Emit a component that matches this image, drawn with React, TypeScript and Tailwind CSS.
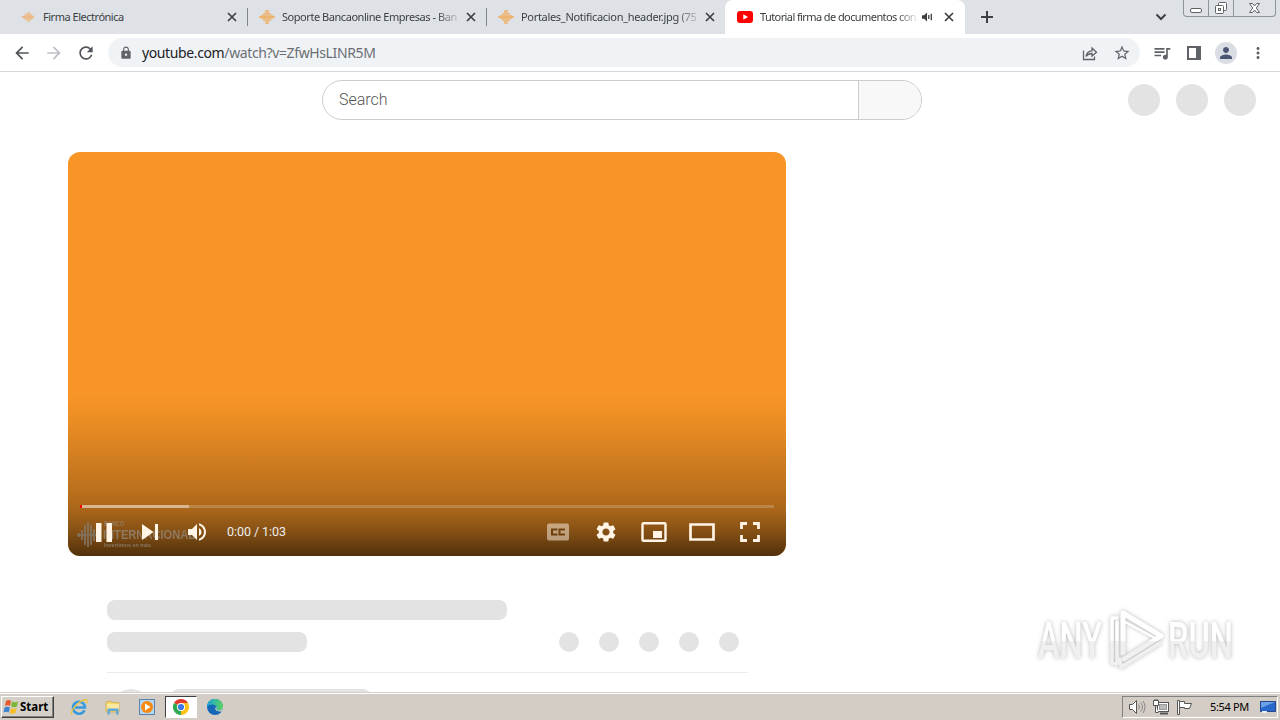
import type { ReactNode } from 'react'
import {
  MdArrowBack,
  MdArrowForward,
  MdRefresh,
  MdLock,
  MdStarOutline,
  MdQueueMusic,
  MdPerson,
  MdMoreVert,
  MdVolumeUp,
  MdSettings,
} from 'react-icons/md'

const BankIcon = ({ small = false }: { small?: boolean }) => (
  <svg width="16" height="16" viewBox="0 0 16 16" className="shrink-0">
    {small ? (
      <g stroke="#f0b47a" strokeWidth="1.6" opacity="0.9">
        <path d="M3 7v2M5 5.500v5M7 4v8M9 3v10M11 5v6M13 6.500v3M2 8h12" />
      </g>
    ) : (
      <g stroke="#eeb068" strokeWidth="1.500">
        <path d="M1 7v2M3 6v4M5 4v8M7 1v14M9 1v14M11 4v8M13 6v4M15 7v2M1 8h14" />
      </g>
    )}
  </svg>
)

const YoutubeIcon = () => (
  <svg width="16" height="12" viewBox="0 0 16 12" className="shrink-0">
    <rect width="16" height="12" rx="3" fill="#f00" />
    <path d="M6.3 3.3v5.4L11 6z" fill="#fff" />
  </svg>
)

const CloseIcon = () => (
  <svg
    width="14"
    height="14"
    viewBox="0 0 14 14"
    className="ml-auto shrink-0"
    stroke="#3c4043"
    strokeWidth="1.700"
  >
    <path d="M3 3l8 8M11 3l-8 8" />
  </svg>
)

type TabProps = {
  icon: ReactNode
  title: string
  className: string
  textClass: string
}

const Tab = ({ icon, title, className, textClass }: TabProps) => (
  <div className={`flex h-[18px] items-center ${className}`}>
    {icon}
    <span
      className={`ml-[7px] whitespace-nowrap text-[11px] leading-4 text-[#3c4043] ${textClass}`}
    >
      {title}
    </span>
    <CloseIcon />
  </div>
)

const fade = '[mask-image:linear-gradient(to_right,black_88%,rgba(0,0,0,0.15))]'

const TabStrip = () => (
  <div className="flex h-[34px] bg-[#dee1e6]">
    <div className="flex pt-2">
      <Tab
        icon={<BankIcon small />}
        title="Firma Electrónica"
        className="ml-5 w-[228px] border-r border-[#80868b] pr-[8px]"
        textClass="tracking-[-0.48px]"
      />
      <Tab
        icon={<BankIcon />}
        title="Soporte Bancaonline Empresas - Ban"
        className="ml-[11px] w-[228px] border-r border-[#80868b] pr-[8px]"
        textClass={`w-[176px] tracking-[-0.45px] ${fade}`}
      />
      <Tab
        icon={<BankIcon />}
        title="Portales_Notificacion_header.jpg (75"
        className="ml-[11px] w-[227px] pr-[8px]"
        textClass={`w-[177px] tracking-[-0.31px] ${fade}`}
      />
    </div>
    <div className="flex h-[34px] w-[240px] rounded-t-lg bg-white pt-2">
      <div className="ml-3 flex h-[18px] w-[219px] items-center">
        <YoutubeIcon />
        <span
          className={`ml-[7px] w-[156px] whitespace-nowrap text-[11px] leading-4 tracking-[-0.59px] text-[#3c4043] ${fade}`}
        >
          Tutorial firma de documentos con
        </span>
        <svg width="11" height="10" viewBox="0 0 11 10" className="ml-[6px]">
          <path d="M0 3.2h2.2L5 .5v9L2.2 6.8H0z" fill="#3c4043" />
          <path d="M6.8 3v4M9.3 1.8v6.4" stroke="#3c4043" strokeWidth="1.3" />
        </svg>
        <CloseIcon />
      </div>
    </div>
    <svg
      width="14"
      height="14"
      viewBox="0 0 14 14"
      className="ml-[15px] mt-[10px]"
      stroke="#3c4043"
      strokeWidth="2"
    >
      <path d="M7 1v12M1 7h12" />
    </svg>
    <svg
      width="12"
      height="8"
      viewBox="0 0 12 8"
      className="ml-auto mr-4 mt-[13px]"
      fill="none"
      stroke="#3c4043"
      strokeWidth="2"
    >
      <path d="M1.500 1.500L6 6l4.500-4.500" />
    </svg>
    <div className="mr-1 flex h-[17px] w-[93px] rounded-b-[4px] border border-t-0 border-[#8e939b]">
      <svg width="91" height="16" viewBox="0 0 91 16" fill="none" stroke="#5f6368">
        <path d="M24.500 0v16M49.500 0v16" stroke="#8e939b" />
        <rect x="6.500" y="8.500" width="11" height="4" rx="1.500" fill="#fff" />
        <rect x="34.500" y="2.500" width="8" height="8" rx="1" fill="#fff" />
        <rect x="31.500" y="5.500" width="8" height="8" rx="1" fill="#fff" />
        <rect x="34.500" y="8.500" width="2" height="2" />
        <path
          d="M65.500 3.500h3l2 2.500 2-2.500h3l-3.200 4.500 3.200 4.500h-3l-2-2.500-2 2.500h-3l3.200-4.500z"
          fill="#fff"
        />
      </svg>
    </div>
  </div>
)

const Toolbar = () => (
  <div className="flex h-[38px] items-center border-b border-[#d5d7da] bg-white text-[#5f6368]">
    <MdArrowBack className="ml-3 size-5 text-[#50545a]" />
    <MdArrowForward className="ml-3 size-5 text-[#bdc1c6]" />
    <MdRefresh className="ml-3 size-5 text-[#50545a]" />
    <div className="ml-3 flex h-[29px] w-[1032px] items-center rounded-full bg-[#f0f3f6]">
      <MdLock className="ml-[11px] size-[14px]" />
      <span className="ml-[9px] whitespace-nowrap text-[14px] leading-5 tracking-[-0.38px] text-[#202124]">
        youtube.com<span className="text-[#6b6f74]">/watch?v=ZfwHsLINR5M</span>
      </span>
      <svg
        width="16"
        height="16"
        viewBox="0 0 16 16"
        className="ml-auto"
        fill="none"
        stroke="currentColor"
        strokeWidth="1.3"
      >
        <path d="M1.500 5.500v9h11v-3" />
        <path d="M4 11.500c.5-4 2.500-5.500 6-5.700V3l4.500 4.300L10 11V8.500c-2.500 0-4.500.8-6 3z" />
      </svg>
      <MdStarOutline className="ml-[15px] mr-[9px] size-[18px]" />
    </div>
    <MdQueueMusic className="ml-3 size-5" />
    <div className="ml-[15px] h-[14px] w-[14px] border-2 border-r-[5px] border-[#5f6368]" />
    <div className="ml-[14px] flex size-[22px] items-center justify-center rounded-full bg-[#dadde3]">
      <MdPerson className="size-[18px] text-[#4a5673]" />
    </div>
    <MdMoreVert className="ml-3 size-[18px]" />
  </div>
)

const Masthead = () => (
  <div className="flex h-14 items-center">
    <div className="ml-[322px] flex h-10 w-[600px] overflow-hidden rounded-full border border-[#ccc]">
      <div className="flex-1 pl-4 font-['Roboto',sans-serif] text-base font-light leading-[38px] text-[#555]">
        Search
      </div>
      <div className="w-[63px] border-l border-[#ccc] bg-[#f8f8f8]" />
    </div>
    <div className="ml-auto mr-6 flex gap-4">
      <div className="size-8 rounded-full bg-[#e3e3e3]" />
      <div className="size-8 rounded-full bg-[#e3e3e3]" />
      <div className="size-8 rounded-full bg-[#e3e3e3]" />
    </div>
  </div>
)

const BankLogo = () => (
  <svg
    width="130"
    height="34"
    viewBox="0 0 130 34"
    className="absolute bottom-[3px] left-2 opacity-75"
    fill="#94887a"
    fontFamily="Liberation Sans, sans-serif"
  >
    <path
      d="M3 14v4M6 11v10M9 6v20M12 3v25M15 6v20M18 10v12M1 16h20"
      stroke="#857a6c"
      strokeWidth="2"
    />
    <text x="28" y="7" fontSize="7" fontWeight="700" textLength="20" lengthAdjust="spacingAndGlyphs">
      BANCO
    </text>
    <text x="27" y="20" fontSize="13" fontWeight="700" textLength="92" lengthAdjust="spacingAndGlyphs">
      INTERNACIONAL
    </text>
    <text x="28" y="28" fontSize="5" fontWeight="700" textLength="47" lengthAdjust="spacingAndGlyphs">
      Invertimos en más
    </text>
  </svg>
)

const Player = () => (
  <div className="relative ml-[68px] mt-6 flex h-[404px] w-[718px] flex-col justify-end overflow-hidden rounded-xl bg-[#f89526]">
    <div className="absolute inset-x-0 bottom-0 h-[162px] bg-[linear-gradient(to_bottom,rgba(0,0,0,0)_0%,rgba(0,0,0,0.06)_18%,rgba(0,0,0,0.16)_40%,rgba(0,0,0,0.25)_60%,rgba(0,0,0,0.32)_72%,rgba(0,0,0,0.48)_86%,rgba(0,0,0,0.68)_100%)]" />
    <BankLogo />
    <div className="relative mx-3 flex h-[3px] bg-white/20">
      <div className="w-[2px] bg-[#f00]" />
      <div className="w-[107px] bg-white/40" />
    </div>
    <div className="relative flex h-12 items-center text-[#fff4e6]">
      <svg width="16" height="19" viewBox="0 0 16 19" className="ml-7" fill="currentColor">
        <path d="M0 0h5.500v19H0zM10.500 0H16v19h-5.500z" />
      </svg>
      <svg width="16" height="16" viewBox="0 0 16 16" className="ml-[30px]" fill="currentColor">
        <path d="M0 0v16l11.500-8zM13 0h3v16h-3z" />
      </svg>
      <MdVolumeUp className="ml-[27px] size-6" />
      <span className="ml-[18px] font-['Roboto',sans-serif] text-[12.500px] tracking-[-0.05px] text-[#eee]">
        0:00 / 1:03
      </span>
      <div className="ml-auto mr-[26px] flex items-center">
        <svg width="24" height="20" viewBox="0 0 24 20" className="mr-6 opacity-50">
          <rect x="1" y="1.500" width="22" height="17" rx="2" fill="#fff4e6" />
          <path
            d="M10.500 8.500V7.500H6v5h4.500v-1M18 8.500V7.500h-4.500v5H18v-1"
            fill="none"
            stroke="#5a3204"
            strokeWidth="2"
          />
        </svg>
        <MdSettings className="mr-[23px] size-6" />
        <svg width="26" height="20" viewBox="0 0 26 20" className="mr-[22px]" fill="none">
          <rect x="1.500" y="1.200" width="23" height="17.600" rx="1" stroke="currentColor" strokeWidth="2.400" />
          <path d="M12 9h9v7h-9z" fill="currentColor" />
        </svg>
        <svg width="26" height="18" viewBox="0 0 26 18" className="mr-[25px]" fill="none">
          <path d="M1.500 1.500h23v15h-23z" stroke="currentColor" strokeWidth="2.700" />
        </svg>
        <svg width="20" height="20" viewBox="0 0 20 20" fill="none">
          <path
            d="M1.500 7V1.500H7M13 1.500h5.500V7M18.500 13v5.500H13M7 18.500H1.500V13"
            stroke="currentColor"
            strokeWidth="2.800"
          />
        </svg>
      </div>
    </div>
  </div>
)

const Skeleton = () => (
  <div className="ml-[107px] mt-11 w-[641px]">
    <div className="h-5 w-[400px] rounded-lg bg-[#e3e3e3]" />
    <div className="mt-3 flex justify-between">
      <div className="h-5 w-[200px] rounded-lg bg-[#e3e3e3]" />
      <div className="mr-[9px] flex gap-5">
        {[0, 1, 2, 3, 4].map(i => (
          <div key={i} className="size-5 rounded-full bg-[#e3e3e3]" />
        ))}
      </div>
    </div>
    <div className="mt-5 border-t border-[#ebebeb]" />
    <div className="mt-4 flex">
      <div className="ml-1 size-10 rounded-full bg-[#e3e3e3]" />
      <div className="ml-5 h-5 w-[200px] rounded-lg bg-[#e3e3e3]" />
    </div>
  </div>
)

const Watermark = () => (
  <svg
    width="210"
    height="72"
    viewBox="0 0 210 72"
    className="absolute bottom-4 right-9 drop-shadow-[0_0_2px_rgba(0,0,0,0.28)]"
    fontFamily="Roboto, sans-serif"
    fontSize="50"
    fontWeight="500"
  >
    <defs>
      <linearGradient id="half" x1="0" y1="0" x2="0" y2="72" gradientUnits="userSpaceOnUse">
        <stop offset="0.52" stopColor="#fff" />
        <stop offset="0.52" stopColor="#f0f0f0" />
      </linearGradient>
    </defs>
    <g fill="url(#half)">
      <text x="4" y="54" textLength="64" lengthAdjust="spacingAndGlyphs">
        ANY
      </text>
      <text x="134" y="54" textLength="65" lengthAdjust="spacingAndGlyphs">
        RUN
      </text>
    </g>
    <g fill="none" stroke="url(#half)" strokeLinejoin="round" strokeLinecap="round">
      <path d="M89 49V9l38 23-37 23" strokeWidth="5" />
      <path d="M91 18l32 17" strokeWidth="2.500" />
      <path d="M83 14h-5v45l5 1V18M86 55l1 8 39-24" strokeWidth="3.500" />
    </g>
  </svg>
)

const ExplorerIcon = () => (
  <svg width="18" height="18" viewBox="0 0 18 18">
    <path d="M2 4l5-1 1 1.500h7V14H2z" fill="#f5d66b" stroke="#c9a646" strokeWidth=".7" />
    <path d="M3 6h12v6H3z" fill="#fbe9a0" />
    <path d="M3.500 16.500v-6h11v6H12v-3.500H6v3.500z" fill="#63a8d8" />
  </svg>
)

const IeIcon = () => (
  <svg width="18" height="18" viewBox="0 0 18 18" fill="none">
    <path d="M14.500 12.200A6 6 0 1 1 15 9.500H5" stroke="#3a9bdc" strokeWidth="2.600" />
    <path d="M2 16.500C-.5 13 9 2.500 15.500 1.800c2-.2 1.700 2 .8 3.500" stroke="#ecc33e" strokeWidth="1.400" />
  </svg>
)

const MediaIcon = () => (
  <svg width="16" height="16" viewBox="0 0 16 16">
    <rect x=".5" y=".5" width="15" height="15" fill="#b8d5f0" stroke="#5584b5" />
    <circle cx="8" cy="8" r="6" fill="#f58a14" />
    <path d="M6 4.500v7L11.500 8z" fill="#fff" />
  </svg>
)

const ChromeIcon = () => (
  <svg width="16" height="16" viewBox="0 0 16 16">
    <path d="M8 8L1.070 4A8 8 0 0 1 14.930 4z" fill="#e33b2e" />
    <path d="M8 8l6.930-4A8 8 0 0 1 8 16z" fill="#fbc116" />
    <path d="M8 8v8A8 8 0 0 1 1.070 4z" fill="#2da94f" />
    <path d="M8 4h6.930l-3.400 6z" fill="#fbc116" />
    <circle cx="8" cy="8" r="4" fill="#fff" />
    <circle cx="8" cy="8" r="3.100" fill="#3b78e7" />
  </svg>
)

const EdgeIcon = () => (
  <svg width="16" height="16" viewBox="0 0 16 16">
    <defs>
      <linearGradient id="edge" x1="0" y1="0" x2="1" y2="0">
        <stop stopColor="#1ca2dc" />
        <stop offset="1" stopColor="#5bd35c" />
      </linearGradient>
    </defs>
    <circle cx="8" cy="8" r="8" fill="#1568b8" />
    <path d="M0 8a8 8 0 0 1 16-.5c0 3-2 4-4.500 4-2 0-2.500-1-1.500-2C9.500 5 3 4 0 8z" fill="url(#edge)" />
    <path d="M9 8c-2 2 .5 5.500 6 4.200L16 9v-1c-.5 2.500-2.500 3.500-4.500 3.500S9 10 10 9z" fill="#d4d0c8" />
  </svg>
)

const StartButton = () => (
  <div className="ml-px flex h-[22px] w-[53px] items-center border border-b-[#404040] border-l-white border-r-[#404040] border-t-white bg-[#d4d0c8] shadow-[inset_-1px_-1px_#808080]">
    <svg width="17" height="16" viewBox="0 0 17 16" className="ml-px">
      <path d="M3 2q3-2 5 0L7 7Q5 5.500 2 7z" fill="#e5592b" />
      <path d="M9 2.500q3 1.500 6 0L14 7.500q-3 1.500-6 0z" fill="#7db73a" />
      <path d="M1.500 8.500q3-1.500 5.500 0l-1.300 5q-2.500-1.500-5.200 0z" fill="#3f83cf" />
      <path d="M8 9q3 1.500 5.700 0l-1.300 5q-3 1.500-5.600 0z" fill="#f4bd2c" />
    </svg>
    <span className="text-[11.500px] font-bold leading-4 text-black">Start</span>
  </div>
)

const Tray = () => (
  <div className="ml-auto mr-[2px] flex h-[22px] w-[156px] items-center border border-b-white border-l-[#808080] border-r-white border-t-[#808080]">
    <svg width="66" height="18" viewBox="0 0 66 18" className="ml-[5px]" fill="#fff" stroke="#555">
      <path d="M1.500 6.500h3l4-4v13l-4-4h-3z" />
      <path d="M10.500 6.500q2 2.500 0 5M12.500 4.500q4 4.500 0 9M15 3q4 6 0 12" fill="none" stroke="#888" />
      <rect x="29.500" y="4.500" width="11" height="9" />
      <rect x="31.500" y="6.500" width="7" height="5" fill="#bbb" stroke="#999" />
      <path d="M32 15.500h8" strokeWidth="2" />
      <path d="M25.500 2.500h5v5h-5zM27.500 7.500v7h3M27 1v2M29 1v2" />
      <path d="M49.500 2.500h2v14h-2z" />
      <path d="M51.500 3.500h5v2h7l-2 5h-5v-1h-5z" />
    </svg>
    <span className="ml-[16px] whitespace-nowrap text-[11px] leading-4 tracking-[-0.35px] text-black">5:54 PM</span>
    <svg width="16" height="14" viewBox="0 0 16 14" className="ml-auto mr-px">
      <path d="M.5 1.500h15v10H.5z" fill="#2868c8" stroke="#24468a" />
      <path d="M1 2h14L1 8z" fill="#6ba1e8" />
      <path d="M2 12h5" stroke="#e8eef5" strokeWidth="2" />
    </svg>
  </div>
)

const Taskbar = () => (
  <div className="flex h-7 items-center border-t border-[#d4d0c8] bg-[#d4cdc5] shadow-[inset_0_1px_#fff]">
    <StartButton />
    <div className="ml-4 flex items-center">
      <IeIcon />
      <div className="ml-4">
        <ExplorerIcon />
      </div>
      <div className="ml-[17px]">
        <MediaIcon />
      </div>
      <div className="ml-[10px] flex h-[22px] w-8 items-center justify-center border border-b-white border-l-[#404040] border-r-white border-t-[#404040] bg-white">
        <ChromeIcon />
      </div>
      <div className="ml-[10px]">
        <EdgeIcon />
      </div>
    </div>
    <Tray />
  </div>
)

export default function App() {
  return (
    <div className="flex h-[720px] w-[1280px] flex-col overflow-hidden bg-white font-['Noto_Sans',sans-serif]">
      <TabStrip />
      <Toolbar />
      <main className="relative min-h-0 flex-1 overflow-hidden">
        <Masthead />
        <Player />
        <Skeleton />
        <Watermark />
      </main>
      <Taskbar />
    </div>
  )
}
